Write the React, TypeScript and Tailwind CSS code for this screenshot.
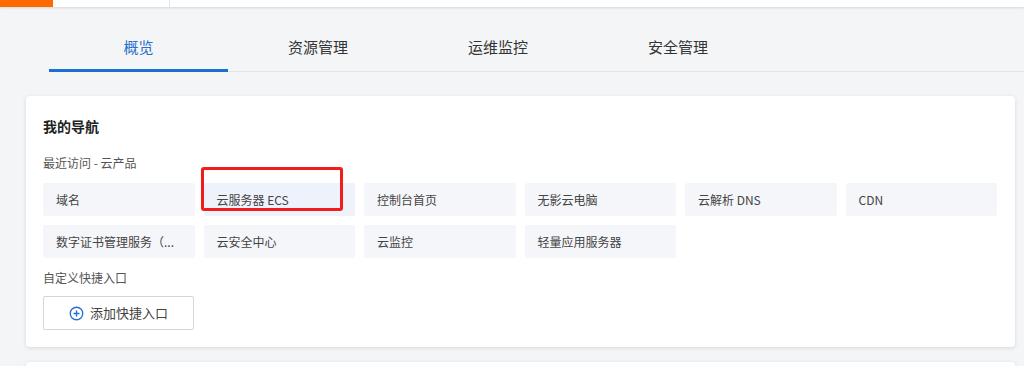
import { CirclePlus } from 'lucide-react';

const tabs = ['概览', '资源管理', '运维监控', '安全管理'];

const recent = [
  '域名',
  '云服务器 ECS',
  '控制台首页',
  '无影云电脑',
  '云解析 DNS',
  'CDN',
  '数字证书管理服务（...',
  '云安全中心',
  '云监控',
  '轻量应用服务器',
];

const App = () => {
  return (
    <div
      className="h-[366px] w-[1024px] overflow-hidden bg-[#f4f5f7] text-[#333]"
      style={{ fontFamily: '"Noto Sans CJK SC", "Noto Sans", sans-serif' }}
    >
      {/* top bar */}
      <div className="flex h-[7px] bg-white shadow-[0_1px_3px_rgba(0,0,0,0.12)]">
        <div className="w-[53px] bg-[#ff6a00]" />
        <div className="w-[116px]" />
        <div className="w-px bg-[#e5e5e5]" />
      </div>

      {/* tabs */}
      <div className="mt-[19px] flex pl-[49px]">
        {tabs.map((t, i) => (
          <div
            key={t}
            className={
              i === 0
                ? 'flex h-[46px] w-[179px] items-start justify-center border-b-[3px] border-[#1b6fd1] pt-[10px] text-[15px] text-[#2670c9]'
                : 'flex h-[46px] w-[180px] items-start justify-center border-b border-[#e3e5e8] pt-[10px] text-[15px] text-[#333]'
            }
          >
            {t}
          </div>
        ))}
        <div className="h-[46px] flex-1 border-b border-[#e3e5e8]" />
      </div>

      {/* card */}
      <div className="mt-[24px] ml-[26px] w-[989px] rounded-[4px] bg-white px-[17px] pt-[18px] pb-[17px] shadow-[0_1px_4px_rgba(0,0,0,0.12)]">
        <div className="text-[14px] font-bold leading-[24px] text-[#222]">我的导航</div>
        <div className="mt-[16px] text-[12px] leading-[18px] text-[#555]">最近访问 - 云产品</div>

        <div className="relative mt-[11px] grid w-[954px] grid-cols-6 gap-x-[9px] gap-y-[9px]">
          {recent.map((r, i) => (
            <div
              key={r}
              className={
                i === 1
                  ? 'flex h-[33px] items-center rounded-[2px] bg-[#eef2fa] pl-[13px] text-[12px] text-[#444]'
                  : 'flex h-[33px] items-center rounded-[2px] bg-[#f5f6f9] pl-[13px] text-[12px] text-[#444]'
              }
            >
              {r}
            </div>
          ))}
          {/* annotation box */}
          <div className="pointer-events-none absolute top-[-16px] left-[158px] h-[44px] w-[142px] rounded-[3px] border-[3px] border-[#f21c1c]" />
        </div>

        <div className="mt-[11px] text-[12px] leading-[18px] text-[#555]">自定义快捷入口</div>

        <button className="mt-[9px] flex h-[34px] w-[151px] items-center justify-center gap-[6px] rounded-[2px] border border-[#d4d6d9] bg-white text-[13px] text-[#444]">
          <CirclePlus className="h-[15px] w-[15px] text-[#2a6fd1]" strokeWidth={2.2} />
          添加快捷入口
        </button>
      </div>

      <div className="mt-[15px] ml-[26px] h-[20px] w-[989px] rounded-t-[4px] bg-white shadow-[0_1px_4px_rgba(0,0,0,0.12)]" />
    </div>
  );
};

export default App;
